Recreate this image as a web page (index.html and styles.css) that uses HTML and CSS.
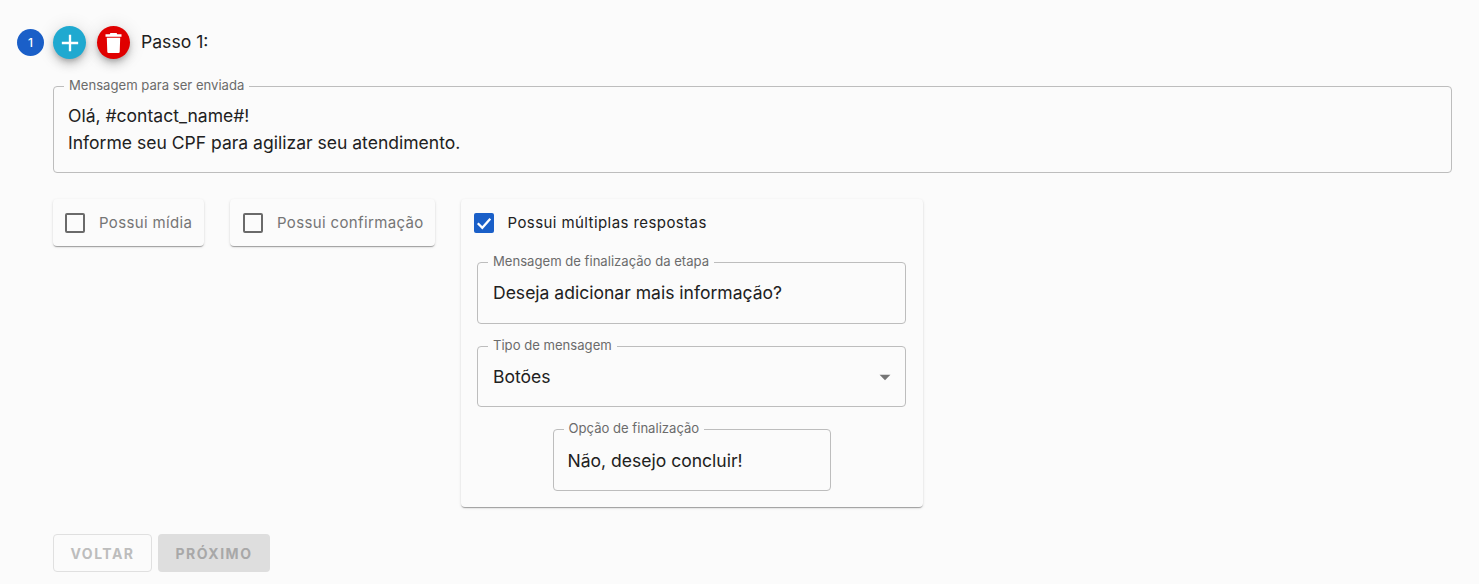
FILE: index.html
```html
<!DOCTYPE html>
<html lang="pt-BR">
<head>
<meta charset="utf-8">
<title>Passo 1</title>
<link rel="stylesheet" href="styles.css">
</head>
<body>
<main class="page">
  <header class="step-head">
    <span class="step-badge">1</span>
    <button class="fab fab-add" type="button" aria-label="Adicionar">
      <svg viewBox="0 0 24 24" width="28" height="28"><path fill="#fff" d="M19 13h-6v6h-2v-6H5v-2h6V5h2v6h6v2z"/></svg>
    </button>
    <button class="fab fab-del" type="button" aria-label="Excluir">
      <svg viewBox="0 0 24 24" width="24" height="24"><path fill="#fff" d="M4.8 6.8h13.4l-.5 14a1.2 1.2 0 0 1-1.2 1.2H6.5a1.2 1.2 0 0 1-1.2-1.2zM3.5 3.2h4.3l.6-1.2h6.2l.6 1.2h4.3v2.6h-16z"/></svg>
    </button>
    <span class="step-title">Passo 1:</span>
  </header>

  <section class="step-body">
    <div class="field field-main">
      <span class="field-label">Mensagem para ser enviada</span>
      <div class="field-value">Olá, #contact_name#!<br>Informe seu CPF para agilizar seu atendimento.</div>
    </div>

    <div class="options">
      <div class="card card-media">
        <label class="check"><span class="box"></span><span class="check-text">Possui mídia</span></label>
      </div>
      <div class="card card-confirm">
        <label class="check"><span class="box"></span><span class="check-text">Possui confirmação</span></label>
      </div>
      <div class="card card-multi">
        <label class="check">
          <span class="box box-on">
            <svg viewBox="0 0 20 20" width="20" height="20"><path fill="none" stroke="#fff" stroke-width="2.3" d="M3.8 10.2l4.5 4.5 8-9"/></svg>
          </span>
          <span class="check-text check-text-on">Possui múltiplas respostas</span>
        </label>
        <div class="multi-fields">
          <div class="field field-end">
            <span class="field-label">Mensagem de finalização da etapa</span>
            <div class="field-value">Deseja adicionar mais informação?</div>
          </div>
          <div class="field field-type">
            <span class="field-label">Tipo de mensagem</span>
            <div class="field-value">Botões</div>
            <svg class="caret" viewBox="0 0 24 24" width="26" height="26"><path fill="#757575" d="M7 10l5 5 5-5z"/></svg>
          </div>
          <div class="field field-option">
            <span class="field-label">Opção de finalização</span>
            <div class="field-value">Não, desejo concluir!</div>
          </div>
        </div>
      </div>
    </div>

    <div class="actions">
      <button class="btn btn-back" type="button" disabled>VOLTAR</button>
      <button class="btn btn-next" type="button" disabled>PRÓXIMO</button>
    </div>
  </section>
</main>
</body>
</html>
```

FILE: styles.css
```css
* { box-sizing: border-box; }
html, body { margin: 0; height: 100%; }
body {
  background: #fbfbfb;
  color: #212121;
  font-family: Inter, "Liberation Sans", sans-serif;
  overflow: hidden;
}
.page { padding: 26px 27px 0 17px; }

.step-head { display: flex; align-items: center; height: 33px; }
.step-badge {
  width: 27px; height: 27px; border-radius: 50%;
  background: #1a5fc8; color: #fff;
  font-size: 12px; font-weight: 500;
  display: flex; align-items: center; justify-content: center;
}
.fab {
  width: 33px; height: 33px; border: 0; border-radius: 50%; padding: 0;
  display: flex; align-items: center; justify-content: center;
  box-shadow: 0 3px 5px -1px rgba(0,0,0,.2), 0 6px 10px 0 rgba(0,0,0,.14), 0 1px 18px 0 rgba(0,0,0,.12);
}
.fab-add { background: #1fa9d0; margin-left: 9px; }
.fab-del { background: #e00000; margin-left: 11px; }
.step-title { font-size: 17.6px; line-height: 31px; margin: 0 0 2px 11px; }

.step-body { margin-left: 36px; padding-top: 27px; }

.field {
  position: relative;
  border: 1px solid #bdbdbd;
  border-radius: 4px;
}
.field-label {
  position: absolute; top: -9px; left: 10px;
  padding: 0 5px;
  background: #fbfbfb;
  color: #6b6b6b;
  font-size: 13.1px; line-height: 15px;
  white-space: nowrap;
}
.field-value { font-size: 17.55px; line-height: 27px; color: #212121; }
.field-main { height: 87px; padding: 15px 14px; }
.field-end, .field-type, .field-option { padding: 16px 15px; }
.field-end { height: 62px; }
.field-type { height: 61px; }
.field-option { height: 62px; width: 278px; align-self: center; padding-left: 14px; padding-top: 17px; }
.caret { position: absolute; right: 7px; top: 17px; }

.options { display: flex; align-items: flex-start; gap: 26px; margin-top: 26px; }
.card {
  background: #fbfbfb;
  border-radius: 4px;
  box-shadow: 0 2px 1px -1px rgba(0,0,0,.2), 0 1px 1px 0 rgba(0,0,0,.14), 0 1px 3px 0 rgba(0,0,0,.12);
}
.card-media { width: 151px; }
.card-confirm { width: 205px; }
.card-multi { width: 462px; height: 308px; }
.check { display: flex; align-items: center; height: 47px; padding-left: 12px; }
.card-confirm .check, .card-multi .check { padding-left: 13px; }
.box {
  width: 20px; height: 20px; border: 2px solid #6a6a6a; border-radius: 2px;
  flex: none;
  display: flex; align-items: center; justify-content: center;
}
.box-on { background: #1a5fc8; border: 0; }
.check-text { font-size: 15px; letter-spacing: .36px; color: #757575; margin-left: 14px; }
.check-text-on { color: #212121; letter-spacing: .42px; margin-left: 13.5px; }
.multi-fields {
  display: flex; flex-direction: column; gap: 22px;
  padding: 16px 17px 0 16px;
}

.actions { display: flex; gap: 6px; margin-top: 27px; }
.btn {
  height: 38px; border-radius: 4px;
  font-family: inherit; font-size: 14px; font-weight: 700; letter-spacing: 1.5px;
  color: #bdbdbd;
}
.btn-back { width: 99px; background: transparent; border: 1px solid #e0e0e0; }
.btn-next { width: 112px; background: #dedede; border: 0; color: #a8a8a8; }
```
